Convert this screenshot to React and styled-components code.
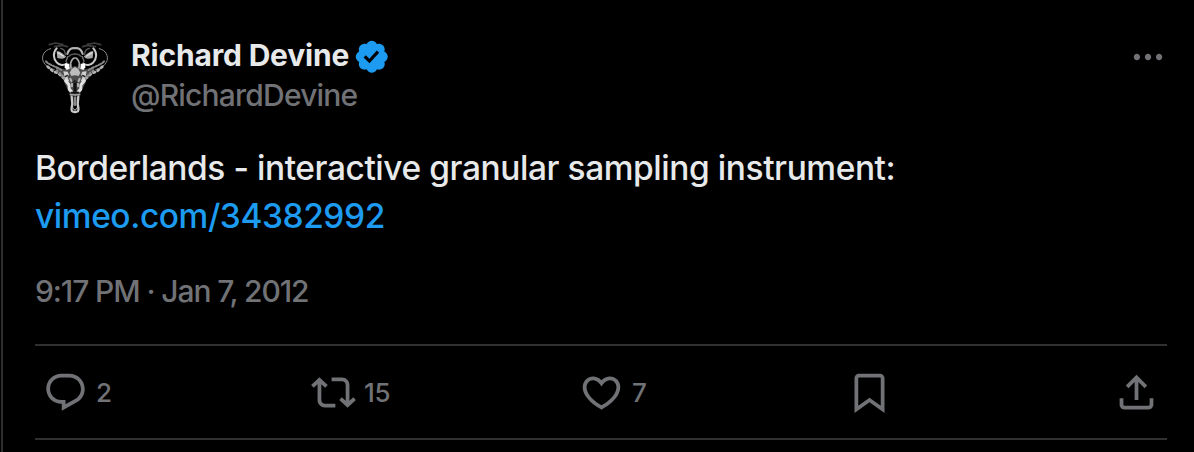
import styled, { createGlobalStyle } from "styled-components";

const GlobalStyle = createGlobalStyle`
  * {
    box-sizing: border-box;
  }

  body {
    margin: 0;
    background: #000;
    font-family: Inter, "Liberation Sans", sans-serif;
    font-weight: 450;
  }
`;

// Column that holds the post
const Post = styled.article`
  display: flex;
  flex-direction: column;
  height: 452px;
  margin-left: 1px;
  padding: 37px 27px 0 32px;
  border-left: 2px solid #2f2f31;
  background: #000;
  color: #e7e9ea;
  overflow: hidden;
`;

const Header = styled.header`
  display: flex;
  align-items: flex-start;
  height: 81px;
`;

const Avatar = styled.svg`
  flex: none;
  width: 80px;
  height: 80px;
  margin-top: 1px;
`;

const Author = styled.div`
  flex: 1;
  padding-left: 16px;
`;

const NameRow = styled.div`
  display: flex;
  align-items: center;
  gap: 4px;
  height: 38px;
`;

const Name = styled.span`
  padding-bottom: 2px;
  font-size: 30px;
  font-weight: 700;
  letter-spacing: -0.18px;
  white-space: nowrap;
`;

const Handle = styled.div`
  height: 40px;
  font-size: 30px;
  line-height: 40px;
  letter-spacing: -0.8px;
  color: #717276;
`;

// Icon sized by prop, coloured by its parent unless told otherwise
const Icon = styled.svg`
  flex: none;
  display: block;
  width: ${(props) => props.$size}px;
  height: ${(props) => props.$size}px;
  fill: ${(props) => props.$color || "currentColor"};
`;

const VerifiedIcon = styled(Icon)`
  margin-top: 1px;
`;

const MoreButton = styled.div`
  margin-top: 1px;
  color: #717276;
`;

const Text = styled.p`
  margin: 26px 0 0;
  font-size: 33.5px;
  line-height: 48px;
  letter-spacing: -0.44px;
  white-space: nowrap;
`;

const Link = styled.span`
  color: #1d9bf0;
`;

const Meta = styled.div`
  margin-top: 31px;
  height: 40px;
  font-size: 30px;
  line-height: 40px;
  letter-spacing: -1.1px;
  color: #717276;
`;

const Actions = styled.div`
  display: flex;
  justify-content: space-between;
  align-items: center;
  height: 96px;
  margin-top: 33px;
  padding: 0 8px;
  border-top: 2px solid #2f3032;
  border-bottom: 2px solid #2f3032;
  color: #717276;
`;

const Action = styled.div`
  display: flex;
  align-items: center;
  width: ${(props) => props.$width}px;
`;

const Count = styled.span`
  padding-left: 8px;
  font-size: 26px;
  letter-spacing: -0.3px;
`;

const icons = {
  more: "M3 12c0-1.1.9-2 2-2s2 .9 2 2-.9 2-2 2-2-.9-2-2zm9 2c1.1 0 2-.9 2-2s-.9-2-2-2-2 .9-2 2 .9 2 2 2zm7 0c1.1 0 2-.9 2-2s-.9-2-2-2-2 .9-2 2 .9 2 2 2z",
  verified:
    "M20.396 11c-.018-.646-.215-1.275-.57-1.816-.354-.54-.852-.972-1.438-1.246.223-.607.27-1.264.14-1.897-.131-.634-.437-1.218-.882-1.687-.47-.445-1.053-.75-1.687-.882-.633-.13-1.29-.083-1.897.14-.273-.587-.704-1.086-1.245-1.44S11.647 1.62 11 1.604c-.646.017-1.273.213-1.813.568s-.969.854-1.24 1.44c-.608-.223-1.267-.272-1.902-.14-.635.13-1.22.436-1.69.882-.445.47-.749 1.055-.878 1.688-.13.633-.08 1.29.144 1.896-.587.274-1.087.705-1.443 1.245-.356.54-.555 1.17-.574 1.817.02.647.218 1.276.574 1.817.356.54.856.972 1.443 1.245-.224.606-.274 1.263-.144 1.896.13.634.433 1.218.877 1.688.47.443 1.054.747 1.687.878.633.132 1.29.084 1.897-.136.274.586.705 1.084 1.246 1.439.54.354 1.17.551 1.816.569.647-.016 1.276-.213 1.817-.567s.972-.854 1.245-1.44c.604.239 1.266.296 1.903.164.636-.132 1.22-.447 1.68-.907.46-.46.776-1.044.908-1.681s.075-1.299-.165-1.903c.586-.274 1.084-.705 1.439-1.246.354-.54.551-1.17.569-1.816zM9.662 14.85l-3.429-3.428 1.293-1.302 2.072 2.072 4.4-4.794 1.347 1.246z",
  reply:
    "M1.751 10c0-4.42 3.584-8 8.005-8h4.366c4.49 0 8.129 3.64 8.129 8.13 0 2.96-1.607 5.68-4.196 7.11l-8.054 4.46v-3.69h-.067c-4.49.1-8.183-3.51-8.183-8.01zm8.005-6c-3.317 0-6.005 2.69-6.005 6 0 3.37 2.77 6.08 6.138 6.01l.351-.01h1.761v2.3l5.087-2.81c1.951-1.08 3.163-3.13 3.163-5.36 0-3.39-2.744-6.13-6.129-6.13H9.756z",
  repost:
    "M4.5 3.88l4.432 4.14-1.364 1.46L5.5 7.55V16c0 1.1.896 2 2 2H13v2H7.5c-2.209 0-4-1.79-4-4V7.55L1.432 9.48.068 8.02 4.5 3.88zM16.5 6H11V4h5.5c2.209 0 4 1.79 4 4v8.45l2.068-1.93 1.364 1.46-4.432 4.14-4.432-4.14 1.364-1.46 2.068 1.93V8c0-1.1-.896-2-2-2z",
  like: "M16.697 5.5c-1.222-.06-2.679.51-3.89 2.16l-.805 1.09-.806-1.09C9.984 6.01 8.526 5.44 7.304 5.5c-1.243.07-2.349.78-2.91 1.91-.552 1.12-.633 2.78.479 4.82 1.074 1.97 3.257 4.27 7.129 6.61 3.87-2.34 6.052-4.64 7.126-6.61 1.111-2.04 1.03-3.7.477-4.82-.561-1.13-1.666-1.84-2.908-1.91zm4.187 7.69c-1.351 2.48-4.001 5.12-8.379 7.67l-.503.3-.504-.3c-4.379-2.55-7.029-5.19-8.382-7.67-1.36-2.5-1.41-4.86-.514-6.67.887-1.79 2.647-2.91 4.601-3.01 1.651-.09 3.368.56 4.798 2.01 1.429-1.45 3.146-2.1 4.796-2.01 1.954.1 3.714 1.22 4.601 3.01.896 1.81.846 4.17-.514 6.67z",
  bookmark:
    "M4 4.5C4 3.12 5.119 2 6.5 2h11C18.881 2 20 3.12 20 4.5v18.44l-8-5.71-8 5.71V4.5zM6.5 4c-.276 0-.5.22-.5.5v14.56l6-4.29 6 4.29V4.5c0-.28-.224-.5-.5-.5h-11z",
  share:
    "M12 2.59l5.7 5.7-1.41 1.42L13 6.41V16h-2V6.41l-3.3 3.3-1.41-1.42L12 2.59zM21 15l-.02 3.51c0 1.38-1.12 2.49-2.5 2.49H5.5C4.11 21 3 19.88 3 18.5V15h2v3.5c0 .28.22.5.5.5h12.98c.28 0 .5-.22.5-.5L19 15h2z",
};

const actions = [
  { name: "reply", count: 2, width: 268 },
  { name: "repost", count: 15, width: 268 },
  { name: "like", count: 7, width: 268 },
  { name: "bookmark", width: 267 },
  { name: "share", width: 45 },
];

// Left half of the horned skull, mirrored for the right half
function SkullHalf() {
  return (
    <g fill="none" stroke="#c9c9c9" strokeLinecap="round" strokeLinejoin="round">
      <path d="M62 56C42 60 33 80 40 95C46 109 60 114 73 119" stroke="#8d8d8d" strokeWidth="3" />
      <path d="M74 112L104 118L135 108V192H120L104 160L96 138Z" fill="#4d4d4d" stroke="none" />
      <path d="M48 94C58 106 76 108 94 120" stroke="#888" strokeWidth="6" strokeDasharray="7 5" />
      <path d="M53 110L70 125L84 129L102 145" stroke="#b5b5b5" strokeWidth="8" strokeDasharray="5 9" />
      <path d="M80 122L94 134L108 150" stroke="#8d8d8d" strokeWidth="7" strokeDasharray="3 8" />
      <path d="M58 44L76 39L98 43M74 50L98 46L112 50" stroke="#3c3c3c" strokeWidth="5" />
      <path d="M80 55C67 68 71 88 80 97C88 107 103 107 110 100" strokeWidth="6" />
      <path d="M80 63C90 63 98 72 108 79C106 86 98 88 82 84Z" fill="#a8a8a8" stroke="none" />
      <path d="M84 68L100 78" stroke="#e0e0e0" strokeWidth="4" />
      <path d="M92 55Q106 58 106 74" stroke="#5c5c5c" strokeWidth="4" />
      <path d="M135 55C122 52 115 62 112 72" stroke="#b5b5b5" strokeWidth="6" />
      <path d="M116 80Q122 72 135 72" stroke="#555" strokeWidth="4" />
      <path d="M113 80L108 94" stroke="#777" strokeWidth="4" />
      <path d="M105 101L118 101L119 116L110 120L104 112Z" fill="#fff" stroke="none" />
      <path d="M123 97Q126 86 133 84M122 99L123 114" stroke="#aaa" strokeWidth="5" />
      <path d="M135 111L125 117L119 128L124 138L135 136Z" fill="#bcbcbc" stroke="none" />
      <path d="M100 124L113 125L117 134L112 140L118 154L107 155Z" fill="#d0d0d0" stroke="none" />
      <path d="M106 140L112 136M128 158L135 152" stroke="#222" strokeWidth="4" />
      <path d="M107 152L117 164L118 178L124 184" stroke="#e2e2e2" strokeWidth="9" />
      <path d="M121 146L126 158L126 176" stroke="#b0b0b0" strokeWidth="6" strokeDasharray="8 8" />
      <path d="M133 160V182M124 188H135" stroke="#111" strokeWidth="5" />
      <path d="M121 194L135 195" stroke="#a0a0a0" strokeWidth="5" />
      <path d="M125 200L127 222L125 233C123 244 127 246 135 246" strokeWidth="7" />
      <path d="M133 201V226" stroke="#8a8a8a" strokeWidth="4" />
      <path d="M129 234Q129 239 135 240" stroke="#aaa" strokeWidth="3" />
    </g>
  );
}

function App() {
  return (
    <>
      <GlobalStyle />
      <Post>
        <Header>
          <Avatar viewBox="15 24 240 240">
            <SkullHalf />
            <g transform="translate(270 0) scale(-1 1)">
              <SkullHalf />
            </g>
          </Avatar>
          <Author>
            <NameRow>
              <Name>Richard Devine</Name>
              <VerifiedIcon viewBox="0 0 22 22" $size={37.5} $color="#1d9bf0">
                <path d={icons.verified} />
              </VerifiedIcon>
            </NameRow>
            <Handle>@RichardDevine</Handle>
          </Author>
          <MoreButton>
            <Icon viewBox="0 0 24 24" $size={38}>
              <path d={icons.more} />
            </Icon>
          </MoreButton>
        </Header>
        <Text>
          Borderlands - interactive granular sampling instrument:
          <br />
          <Link>vimeo.com/34382992</Link>
        </Text>
        <Meta>9:17 PM · Jan 7, 2012</Meta>
        <Actions>
          {actions.map((action) => (
            <Action key={action.name} $width={action.width}>
              <Icon viewBox="0 0 24 24" $size={45}>
                <path d={icons[action.name]} />
              </Icon>
              {action.count && <Count>{action.count}</Count>}
            </Action>
          ))}
        </Actions>
      </Post>
    </>
  );
}

export default App;
